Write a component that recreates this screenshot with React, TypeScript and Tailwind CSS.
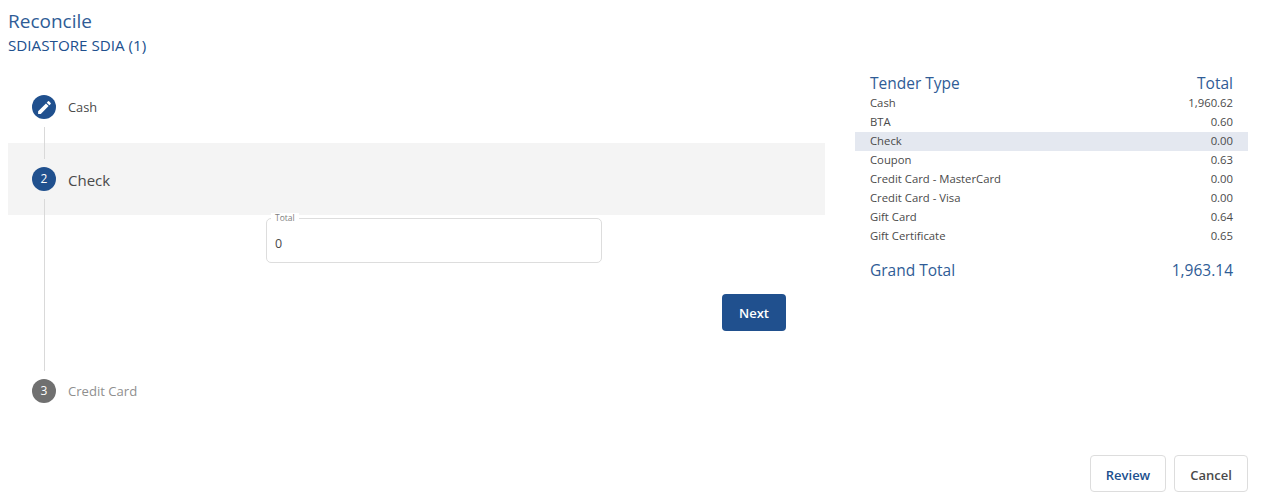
import { MdEdit } from "react-icons/md";

const rows = [
  ["Cash", "1,960.62"],
  ["BTA", "0.60"],
  ["Check", "0.00"],
  ["Coupon", "0.63"],
  ["Credit Card - MasterCard", "0.00"],
  ["Credit Card - Visa", "0.00"],
  ["Gift Card", "0.64"],
  ["Gift Certificate", "0.65"],
];

export default function App() {
  return (
    <div className="w-[1270px] h-[501px] flex flex-col bg-white overflow-hidden font-['Open_Sans',sans-serif] text-[#4a4a4a]">
      <header className="pl-2 pt-[9px] h-[73px] shrink-0">
        <div className="text-[19px] leading-[25px] text-[#2f5c96]">Reconcile</div>
        <div className="text-[15.2px] leading-[20px] text-[#20508e] mt-[1px]">SDIASTORE SDIA (1)</div>
      </header>

      <div className="flex flex-1 min-h-0">
        <section className="w-[825px] pl-2 shrink-0">
          <div className="h-[22px]" />
          <div className="h-[32px] pl-6 flex items-start gap-3">
            <span className="w-6 h-6 rounded-full bg-[#20508e] flex items-center justify-center text-white">
              <MdEdit className="w-[17px] h-[17px]" />
            </span>
            <span className="text-[12.8px] leading-6">Cash</span>
          </div>
          <div className="ml-9 w-px h-4 bg-[#d9d9d9]" />
          <div className="h-[72px] bg-[#f4f4f4] flex flex-col">
            <div className="ml-9 w-px h-4 bg-[#d9d9d9]" />
            <div className="h-10 pl-6 flex items-center gap-3">
              <span className="w-6 h-6 rounded-full bg-[#20508e] flex items-center justify-center text-white text-[12px]">2</span>
              <span className="text-[15px] pt-[3px]">Check</span>
            </div>
            <div className="ml-9 w-px flex-1 bg-[#d9d9d9]" />
          </div>
          <div className="ml-9 h-[156px] border-l border-[#d9d9d9] pt-[3px] flex flex-col">
            <div className="relative ml-[221px] w-[336px] h-[45px] border border-[#dddddd] rounded-[5px] pl-2 flex items-center pt-[7px] text-[12.5px]">
              <span className="absolute left-[4px] -top-[6px] bg-white px-1 text-[8.5px] leading-[10px] text-[#808080]">Total</span>
              0
            </div>
            <button className="ml-[677px] mt-[31px] w-16 h-[37px] pt-[3px] rounded-[4px] bg-[#20508e] text-white text-[13px] font-semibold">Next</button>
          </div>
          <div className="mt-2 pl-6 flex items-center gap-3 h-6">
            <span className="w-6 h-6 rounded-full bg-[#707070] flex items-center justify-center text-white text-[12px]">3</span>
            <span className="text-[13.1px] pt-[1px] text-[#8f8f8f]">Credit Card</span>
          </div>
        </section>

        <aside className="flex-1 flex flex-col pl-[30px] pr-[22px]">
          <div className="px-[15px] flex justify-between text-[15.5px] leading-5 text-[#2f5c96]">
            <span>Tender Type</span>
            <span>Total</span>
          </div>
          <div className="mt-[1px]">
            {rows.map(([name, value]) => (
              <div
                key={name}
                className={
                  name === "Check"
                    ? "h-[19px] px-[15px] flex justify-between items-center text-[11.3px] bg-[#e4e8f0]"
                    : "h-[19px] px-[15px] flex justify-between items-center text-[11.3px]"
                }
              >
                <span>{name}</span>
                <span>{value}</span>
              </div>
            ))}
          </div>
          <div className="mt-[14px] px-[15px] flex justify-between text-[15.5px] leading-5 text-[#2f5c96]">
            <span>Grand Total</span>
            <span>1,963.14</span>
          </div>
          <div className="mt-auto mb-[9px] flex justify-end gap-2">
            <button className="w-[76px] h-[37px] pt-[4px] rounded-[4px] border border-[#dddddd] bg-white text-[#20508e] text-[13px] font-semibold">Review</button>
            <button className="w-[74px] h-[37px] pt-[4px] rounded-[4px] border border-[#dddddd] bg-white text-[#4a4a4a] text-[13px] font-semibold">Cancel</button>
          </div>
        </aside>
      </div>
    </div>
  );
}
